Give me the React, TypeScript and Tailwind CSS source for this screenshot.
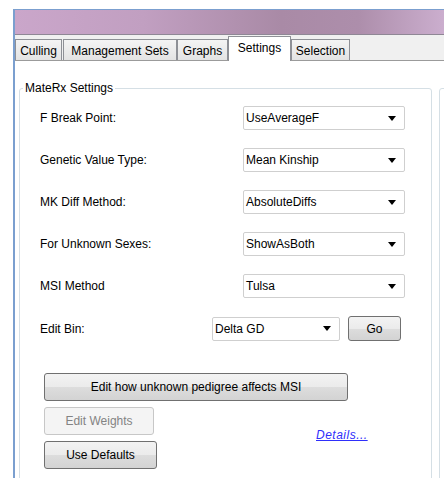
import { ReactNode } from 'react';

const font = { fontFamily: '"Liberation Sans", Arial, sans-serif' };

function Tab({ label, width, active }: { label: string; width: string; active?: boolean }) {
  if (active) {
    return (
      <div
        className={`${width} relative z-10 -mb-px flex h-[25px] items-start justify-center border border-b-0 border-[#8e9096] bg-white pt-[4px]`}
      >
        {label}
      </div>
    );
  }
  return (
    <div
      className={`${width} flex h-[21px] items-center justify-center border border-b-0 border-[#8e9096] bg-[linear-gradient(#f4f4f4,#e3e3e3)] pt-[1px]`}
    >
      {label}
    </div>
  );
}

function Select({ value, width }: { value: string; width: string }) {
  return (
    <div
      className={`${width} flex h-[24px] items-center justify-between rounded-[2px] border border-[#cfcfcf] bg-white pl-[2px] pr-[8px]`}
    >
      <span>{value}</span>
      <svg width="8" height="5" viewBox="0 0 8 5">
        <path d="M0 0h8L4 5z" fill="#000" />
      </svg>
    </div>
  );
}

function Button({ children, width, disabled }: { children: ReactNode; width: string; disabled?: boolean }) {
  const look = disabled
    ? 'border-[#c7c7c7] bg-[#f4f4f4] text-[#838383]'
    : 'border-[#707070] bg-[linear-gradient(#f3f3f3_0%,#ebebeb_50%,#dddddd_50%,#d3d3d3_100%)] text-black';
  return (
    <div className={`${width} ${look} flex h-[28px] items-center justify-center rounded-[3px] border`}>
      {children}
    </div>
  );
}

const rows = [
  { label: 'F Break Point:', value: 'UseAverageF' },
  { label: 'Genetic Value Type:', value: 'Mean Kinship' },
  { label: 'MK Diff Method:', value: 'AbsoluteDiffs' },
  { label: 'For Unknown Sexes:', value: 'ShowAsBoth' },
  { label: 'MSI Method', value: 'Tulsa' },
];

export default function App() {
  return (
    <div className="h-[478px] w-[444px] overflow-hidden bg-white text-[12px] leading-[14px] text-black" style={font}>
      <div className="ml-[13px] mt-[9px] flex h-[469px] w-[431px] flex-col overflow-hidden border-l-2 border-t border-[#7b9fcf]">
        {/* title bar */}
        <div className="h-[25px] shrink-0 border-b border-[#8f8795] bg-[linear-gradient(90deg,#caa6ca_0%,#c19fc1_30%,#a98aa6_62%,#ad8eab_80%,#cbaece_100%)]" />

        {/* tab strip */}
        <div className="flex h-[26px] shrink-0 items-end border-b border-[#9b9b9b] bg-[#f0f0f0]">
          <Tab label="Culling" width="w-[47px]" />
          <div className="w-[1px]" />
          <Tab label="Management Sets" width="w-[114px]" />
          <Tab label="Graphs" width="w-[51px]" />
          <Tab label="Settings" width="w-[63px]" active />
          <Tab label="Selection" width="w-[59px]" />
        </div>

        {/* page body */}
        <div className="flex min-h-0 flex-1 gap-[7px] bg-white pl-[4px] pt-[27px]">
          <div className="relative h-[420px] w-[413px] shrink-0 rounded-[3px] border border-[#d5dfe5]">
            <div className="absolute -top-[8px] left-[3px] bg-white px-[2px]">MateRx Settings</div>

            <div className="flex flex-col pl-[20px] pt-[17px]">
              <div className="flex flex-col gap-[18px]">
                {rows.map((r) => (
                  <div key={r.label} className="flex h-[24px] items-center">
                    <div className="w-[203px]">{r.label}</div>
                    <Select value={r.value} width="w-[162px]" />
                  </div>
                ))}
                <div className="flex h-[25px] items-center">
                  <div className="w-[172px]">Edit Bin:</div>
                  <Select value="Delta GD" width="w-[128px]" />
                  <div className="ml-[8px]">
                    <div className="flex h-[25px] w-[53px] items-center justify-center rounded-[3px] border border-[#707070] bg-[linear-gradient(#f3f3f3_0%,#ebebeb_50%,#dddddd_50%,#d3d3d3_100%)]">
                      Go
                    </div>
                  </div>
                </div>
              </div>

              <div className="ml-[4px] mt-[32px] flex flex-col gap-[6px]">
                <Button width="w-[304px]">Edit how unknown pedigree affects MSI</Button>
                <div className="flex items-center">
                  <div className="flex flex-col gap-[6px]">
                    <Button width="w-[110px]" disabled>
                      Edit Weights
                    </Button>
                    <Button width="w-[113px]">Use Defaults</Button>
                  </div>
                  <a className="ml-[159px] -mt-[6px] italic tracking-[0.5px] text-[#2f2ffb] underline">Details...</a>
                </div>
              </div>
            </div>
          </div>
          <div className="h-[420px] w-[20px] shrink-0 rounded-[3px] border border-[#d5dfe5]" />
        </div>
      </div>
    </div>
  );
}
